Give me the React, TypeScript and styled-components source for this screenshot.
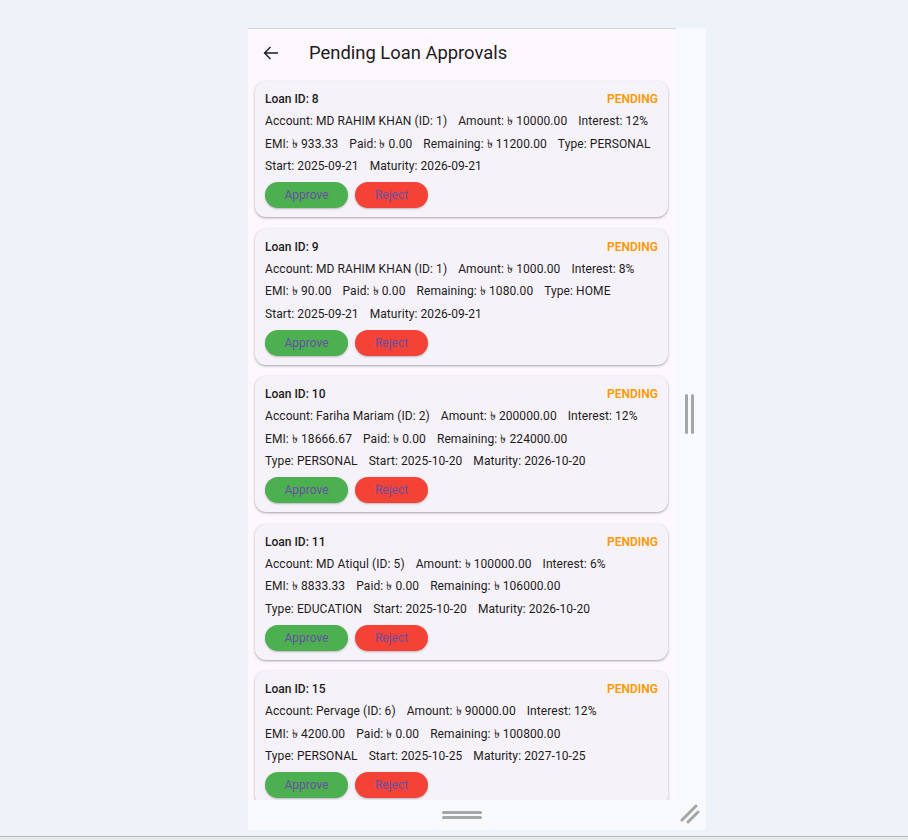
import React from 'react';
import styled, { createGlobalStyle } from 'styled-components';

const GlobalStyle = createGlobalStyle`
    html, body {
        margin: 0;
        padding: 0;
        background: #eef2f9;
        font-family: Roboto, "Noto Sans", "Liberation Sans", sans-serif;
    }
`;

interface Loan {
    id: number;
    account: string;
    accountId: number;
    amount: string;
    interest: string;
    emi: string;
    paid: string;
    remaining: string;
    type: string;
    start: string;
    maturity: string;
}

const loans: Loan[] = [
    { id: 8, account: 'MD RAHIM KHAN', accountId: 1, amount: '10000.00', interest: '12%', emi: '933.33', paid: '0.00', remaining: '11200.00', type: 'PERSONAL', start: '2025-09-21', maturity: '2026-09-21' },
    { id: 9, account: 'MD RAHIM KHAN', accountId: 1, amount: '1000.00', interest: '8%', emi: '90.00', paid: '0.00', remaining: '1080.00', type: 'HOME', start: '2025-09-21', maturity: '2026-09-21' },
    { id: 10, account: 'Fariha Mariam', accountId: 2, amount: '200000.00', interest: '12%', emi: '18666.67', paid: '0.00', remaining: '224000.00', type: 'PERSONAL', start: '2025-10-20', maturity: '2026-10-20' },
    { id: 11, account: 'MD Atiqul', accountId: 5, amount: '100000.00', interest: '6%', emi: '8833.33', paid: '0.00', remaining: '106000.00', type: 'EDUCATION', start: '2025-10-20', maturity: '2026-10-20' },
    { id: 15, account: 'Pervage', accountId: 6, amount: '90000.00', interest: '12%', emi: '4200.00', paid: '0.00', remaining: '100800.00', type: 'PERSONAL', start: '2025-10-25', maturity: '2027-10-25' },
];

const Page = styled.div`
    min-height: 100vh;
    display: flex;
    flex-direction: column;
`;

const Stage = styled.div`
    padding: 28px 0 0 248px;
`;

const Device = styled.div`
    width: 458px;
    display: flex;
    flex-direction: column;
`;

const DeviceBody = styled.div`
    display: flex;
    height: 772px;
`;

const Screen = styled.div`
    width: 428px;
    display: flex;
    flex-direction: column;
    background: #fdf7fe;
    border-top: 1px solid #d6d6d8;
    overflow: hidden;
`;

const AppBar = styled.header`
    height: 47px;
    flex-shrink: 0;
    display: flex;
    align-items: center;
    padding: 0 0 0 14px;
    gap: 29px;
    color: #1d1b20;
`;

const BackButton = styled.button`
    border: none;
    background: none;
    padding: 0;
    width: 18px;
    height: 18px;
    display: flex;
    align-items: center;
    justify-content: center;
    color: #1d1b20;
    cursor: pointer;
`;

const Title = styled.h1`
    margin: 0;
    font-size: 18.4px;
    font-weight: 400;
    letter-spacing: 0;
`;

const List = styled.div`
    display: flex;
    flex-direction: column;
    gap: 11.6px;
    padding: 5px 8px 0 7px;
`;

const Card = styled.div`
    background: #f6f2f9;
    border-radius: 11px;
    padding: 7px 10px 9px;
    box-shadow: 0 1px 3px rgba(0, 0, 0, 0.28), 0 1px 1px rgba(0, 0, 0, 0.08);
    color: #1d1b20;
`;

const CardHeader = styled.div`
    display: flex;
    justify-content: space-between;
    align-items: center;
    height: 22px;
`;

const LoanId = styled.span`
    font-size: 12px;
    font-weight: 500;
`;

const Status = styled.span`
    font-size: 12px;
    font-weight: 600;
    color: #ff9800;
`;

const Details = styled.div`
    display: flex;
    flex-wrap: wrap;
    column-gap: 11px;
`;

const Detail = styled.span`
    font-size: 12px;
    line-height: 22.5px;
    letter-spacing: 0.08px;
`;

const Actions = styled.div`
    display: flex;
    gap: 7px;
    margin-top: 4.5px;
`;

const ActionButton = styled.button<{ $color: string; $width: number }>`
    height: 26px;
    width: ${props => props.$width}px;
    border: none;
    border-radius: 13px;
    background: ${props => props.$color};
    color: #6750a4;
    font-family: inherit;
    font-size: 12px;
    font-weight: 400;
    box-shadow: 0 1px 2px rgba(0, 0, 0, 0.25);
    cursor: pointer;
`;

const SidePanel = styled.div`
    width: 30px;
    background: #f8f9fe;
    display: flex;
    align-items: center;
    justify-content: center;
`;

const VerticalGrip = styled.div`
    display: flex;
    gap: 3px;
    height: 40px;
    margin-left: -4px;

    &::before, &::after {
        content: '';
        width: 3px;
        border-radius: 2px;
        background: #a6a6a6;
    }
`;

const BottomBar = styled.div`
    height: 30px;
    background: #f8f9fd;
    display: flex;
    align-items: center;
    justify-content: center;
    position: relative;
`;

const HorizontalGrip = styled.div`
    display: flex;
    flex-direction: column;
    gap: 2px;
    width: 40px;
    margin-left: -30px;

    &::before, &::after {
        content: '';
        height: 3px;
        border-radius: 2px;
        background: #a6a6a6;
    }
`;

const CornerGrip = styled.svg`
    position: absolute;
    right: 6px;
    bottom: 6px;
`;

const Footer = styled.div`
    margin-top: auto;
    height: 3px;
    border-top: 1px solid #babdc0;
    background: #e8ebed;
`;

const LoanCard: React.FC<{ loan: Loan }> = ({ loan }) => (
    <Card>
        <CardHeader>
            <LoanId>Loan ID: {loan.id}</LoanId>
            <Status>PENDING</Status>
        </CardHeader>
        <Details>
            <Detail>Account: {loan.account} (ID: {loan.accountId})</Detail>
            <Detail>Amount: ৳ {loan.amount}</Detail>
            <Detail>Interest: {loan.interest}</Detail>
            <Detail>EMI: ৳ {loan.emi}</Detail>
            <Detail>Paid: ৳ {loan.paid}</Detail>
            <Detail>Remaining: ৳ {loan.remaining}</Detail>
            <Detail>Type: {loan.type}</Detail>
            <Detail>Start: {loan.start}</Detail>
            <Detail>Maturity: {loan.maturity}</Detail>
        </Details>
        <Actions>
            <ActionButton $color="#4caf50" $width={83}>Approve</ActionButton>
            <ActionButton $color="#f44336" $width={73}>Reject</ActionButton>
        </Actions>
    </Card>
);

export default function App() {
    return (
        <Page>
            <GlobalStyle />
            <Stage>
                <Device>
                    <DeviceBody>
                        <Screen>
                            <AppBar>
                                <BackButton aria-label="Back">
                                    <svg width="16" height="16" viewBox="0 0 16 16" fill="none" stroke="currentColor" strokeWidth="1.4">
                                        <path d="M15 8H1.5M7.5 2L1.5 8l6 6" />
                                    </svg>
                                </BackButton>
                                <Title>Pending Loan Approvals</Title>
                            </AppBar>
                            <List>
                                {loans.map(loan => <LoanCard key={loan.id} loan={loan} />)}
                            </List>
                        </Screen>
                        <SidePanel>
                            <VerticalGrip />
                        </SidePanel>
                    </DeviceBody>
                    <BottomBar>
                        <HorizontalGrip />
                        <CornerGrip width="20" height="20" viewBox="0 0 20 20" stroke="#a6a6a6" strokeWidth="3" strokeLinecap="round">
                            <path d="M2 16L16 2M8 18L18 8" />
                        </CornerGrip>
                    </BottomBar>
                </Device>
            </Stage>
            <Footer />
        </Page>
    );
}
